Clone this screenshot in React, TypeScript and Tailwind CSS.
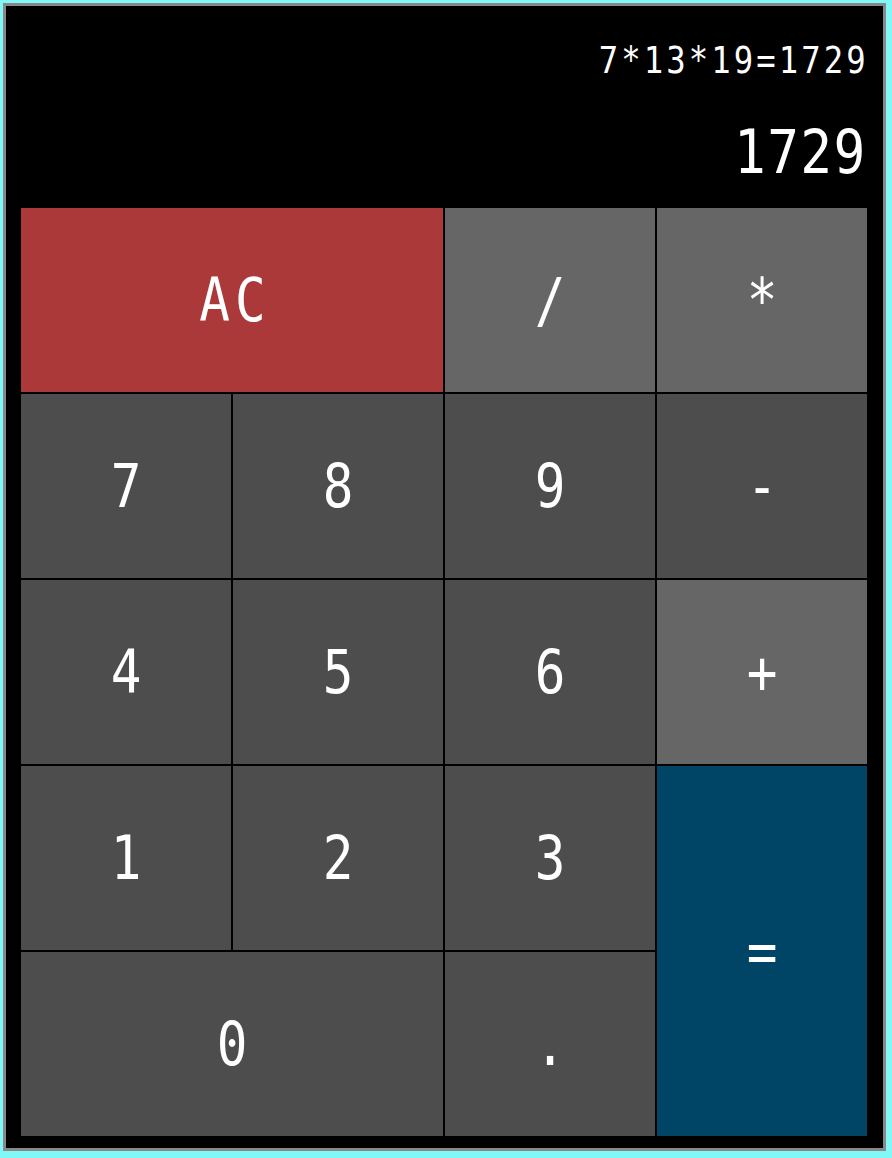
import React from 'react'

type Key = { label: string; cls: string; span?: string }

const keys: Key[] = [
  { label: 'AC', cls: 'bg-[#ac3939]', span: 'col-span-2' },
  { label: '/', cls: 'bg-[#666666]' },
  { label: '*', cls: 'bg-[#666666]' },
  { label: '7', cls: 'bg-[#4d4d4d]' },
  { label: '8', cls: 'bg-[#4d4d4d]' },
  { label: '9', cls: 'bg-[#4d4d4d]' },
  { label: '-', cls: 'bg-[#4d4d4d]' },
  { label: '4', cls: 'bg-[#4d4d4d]' },
  { label: '5', cls: 'bg-[#4d4d4d]' },
  { label: '6', cls: 'bg-[#4d4d4d]' },
  { label: '+', cls: 'bg-[#666666]' },
  { label: '1', cls: 'bg-[#4d4d4d]' },
  { label: '2', cls: 'bg-[#4d4d4d]' },
  { label: '3', cls: 'bg-[#4d4d4d]' },
  { label: '=', cls: 'bg-[#004466]', span: 'row-span-2' },
  { label: '0', cls: 'bg-[#4d4d4d]', span: 'col-span-2' },
  { label: '.', cls: 'bg-[#4d4d4d]' },
]

export default function App() {
  return (
    <div className="min-h-screen bg-[#80f8f8] pt-[3px] pl-[3px]" style={{ fontFamily: '"DejaVu Sans Mono", monospace' }}>
      <div className="w-[883px] h-[1148px] border-[3px] border-[#888888] bg-black pl-[14px] pr-[12px] pb-[11px] flex flex-col">
        <div className="h-[201px] flex flex-col items-end justify-start text-white pr-[6px]">
          <div className="text-[38px] leading-none mt-[35px] tracking-[3.6px] mr-[-3.6px] scale-x-[0.85] origin-right">7*13*19=1729</div>
          <div className="text-[60px] leading-none mt-[43px] tracking-[1.5px] mr-[-1.5px] scale-x-[0.88] origin-right">1729</div>
        </div>
        <div className="grid grid-cols-[repeat(4,212px)] grid-rows-[repeat(5,186px)]">
          {keys.map((k) => (
            <button
              key={k.label}
              className={`${k.cls} ${k.span ?? ''} border border-black text-white text-[60px] leading-none flex items-center justify-center`}
            >
              <span className={`inline-block scale-x-[0.85] ${k.label === 'AC' ? 'tracking-[6px] ml-[6px]' : ''}`}>{k.label}</span>
            </button>
          ))}
        </div>
      </div>
    </div>
  )
}
